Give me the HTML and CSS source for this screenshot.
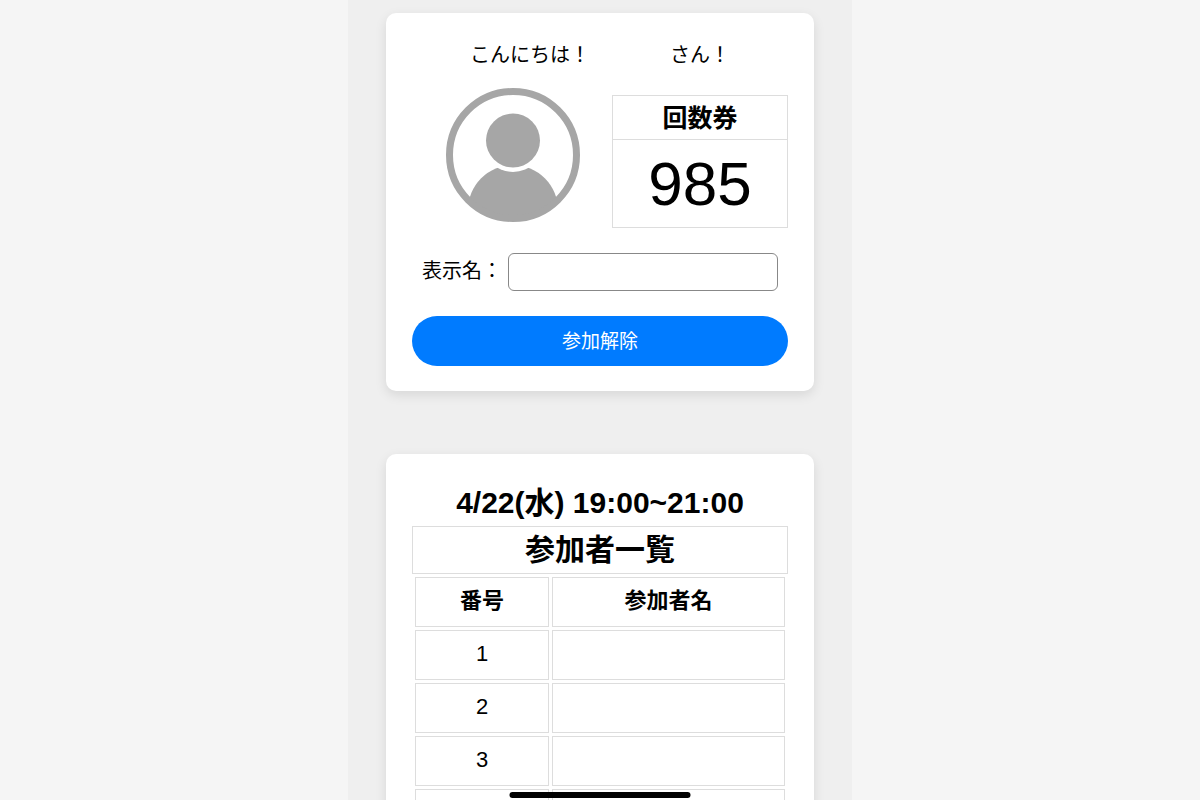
FILE: index.html
```html
<!DOCTYPE html>
<html lang="ja">
<head>
  <meta charset="UTF-8" />
  <meta name="viewport" content="width=device-width, initial-scale=1.0"/>
  <title>参加者一覧</title>
  <link rel="stylesheet" href="styles.css">
</head>
<body>

<main class="screen">

  <!-- プロフィール -->
  <section class="card">
    <p class="greeting">こんにちは！<span class="user-name"></span>さん！</p>

    <div class="profile">
      <svg class="avatar" viewBox="0 0 134 134" aria-hidden="true">
        <defs>
          <clipPath id="face"><circle cx="67" cy="67" r="66"/></clipPath>
        </defs>
        <g clip-path="url(#face)">
          <circle cx="67" cy="122" r="45" fill="#a6a6a6"/>
          <circle cx="67" cy="52.5" r="31.5" fill="#fff"/>
        </g>
        <circle cx="67" cy="52.5" r="27" fill="#a6a6a6"/>
        <circle cx="67" cy="67" r="63.5" fill="none" stroke="#a6a6a6" stroke-width="7"/>
      </svg>

      <table class="ticket">
        <tr><th>回数券</th></tr>
        <tr><td>985</td></tr>
      </table>
    </div>

    <form>
      <div class="name-row">
        <label for="displayName">表示名：</label>
        <input type="text" id="displayName">
      </div>
      <button type="button" class="join-button">参加解除</button>
    </form>
  </section>

  <!-- 参加者一覧 -->
  <section class="card">
    <h2>4/22(水) 19:00~21:00</h2>
    <table class="members">
      <caption>参加者一覧</caption>
      <tr><th class="number">番号</th><th>参加者名</th></tr>
      <tr><td>1</td><td></td></tr>
      <tr><td>2</td><td></td></tr>
      <tr><td>3</td><td></td></tr>
      <tr><td></td><td></td></tr>
    </table>
  </section>

</main>

<div class="home-bar"></div>

</body>
</html>
```
FILE: styles.css
```css
* {
  box-sizing: border-box;
}
body {
  font-family: "Liberation Sans", "Noto Sans CJK JP", sans-serif;
  background: #f5f5f5;
  margin: 0;
  color: #000;
}
.screen {
  max-width: 504px;
  height: 100vh;
  margin: 0 auto;
  padding: 13px 38px 0;
  background: #efefef;
  overflow: hidden;
}
.card {
  background: #fff;
  border-radius: 10px;
  padding: 26px 26px 25px;
  margin-bottom: 63px;
  box-shadow: 0 4px 12px rgba(0, 0, 0, 0.1);
}
.greeting {
  margin: 0 0 17px;
  font-size: 20px;
  line-height: 32px;
  text-align: center;
}
.user-name {
  display: inline-block;
  min-width: 80px;
}
.profile {
  display: flex;
  align-items: flex-end;
  padding-left: 2px;
  margin-bottom: 25px;
}
.avatar {
  width: 134px;
  height: 134px;
  margin: 0 auto;
  align-self: flex-start;
}
.ticket {
  width: 176px;
  margin-top: 7px;
  border-collapse: collapse;
  text-align: center;
}
.ticket th, .ticket td {
  border: 1px solid #ddd;
  padding: 0;
}
.ticket th {
  height: 44px;
  font-size: 25px;
  line-height: 36px;
}
.ticket td {
  height: 88px;
  font-size: 62px;
  line-height: 72px;
}
.name-row {
  display: flex;
  align-items: center;
  padding: 0 10px;
  margin-bottom: 25px;
}
label {
  padding-bottom: 2px;
  font-size: 20px;
  line-height: 30px;
}
input {
  flex: 1;
  min-width: 0;
  height: 38px;
  margin-left: 6px;
  padding: 0 10px;
  border: 1px solid #888;
  border-radius: 6px;
  background: #fff;
  font: inherit;
  font-size: 20px;
}
.join-button {
  display: block;
  width: 100%;
  height: 50px;
  padding: 0 0 3px;
  border: none;
  border-radius: 25px;
  background: #007bff;
  color: #fff;
  font-family: inherit;
  font-size: 19px;
  cursor: pointer;
}
h2 {
  margin: 0;
  font-size: 30px;
  line-height: 46px;
  text-align: center;
}
.members {
  width: 100%;
  table-layout: fixed;
  border-spacing: 3px;
  text-align: center;
  font-size: 22px;
  line-height: 32px;
}
.members caption {
  height: 48px;
  border: 1px solid #ddd;
  font-size: 30px;
  font-weight: bold;
  line-height: 46px;
}
.members th, .members td {
  height: 50px;
  padding: 0 0 2px;
  border: 1px solid #ddd;
}
.members .number {
  width: 134px;
}
.home-bar {
  position: fixed;
  bottom: 2px;
  left: 50%;
  width: 181px;
  height: 6px;
  border-radius: 3px;
  background: #000;
  transform: translateX(-50%);
}
```
